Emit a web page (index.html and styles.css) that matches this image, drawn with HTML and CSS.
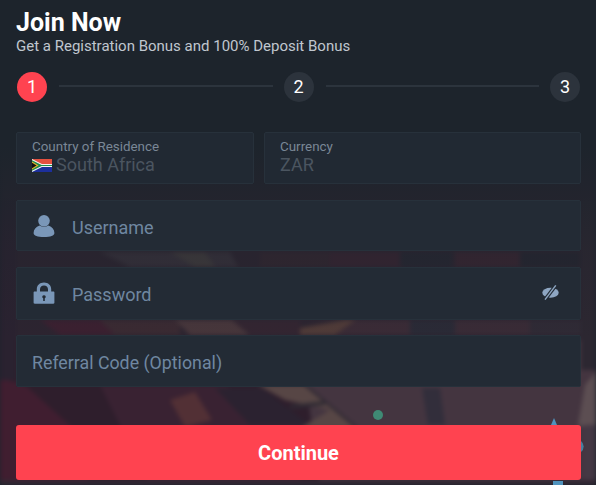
FILE: index.html
```html
<!DOCTYPE html>
<html lang="en">
<head>
<meta charset="utf-8">
<title>Join Now</title>
<link rel="stylesheet" href="styles.css">
</head>
<body>
<div class="page">
  <svg class="backdrop" viewBox="0 0 596 485" aria-hidden="true">
    <defs>
      <linearGradient id="fade" x1="0" y1="0" x2="0" y2="1">
        <stop offset="0" stop-color="#1d242c"/>
        <stop offset="0.3" stop-color="#1d242c"/>
        <stop offset="0.52" stop-color="#1d242c" stop-opacity="0.25"/>
        <stop offset="0.7" stop-color="#1d242c" stop-opacity="0"/>
      </linearGradient>
    </defs>
    <g class="backdrop-shapes">
      <rect width="596" height="485" fill="#2c2430"/>
      <rect y="340" width="596" height="145" fill="#2e1e2c"/>
      <polygon points="300,340 596,340 596,485 320,485" fill="#443540"/>
      <polygon points="0,378 25,385 75,430 90,485 0,485" fill="#401e30"/>
      <polygon points="100,385 225,385 300,425 300,485 150,485" fill="#392232"/>
      <polygon points="170,400 195,392 212,420 185,427" fill="#523035"/>
      <polygon points="215,388 262,388 310,425 250,425" fill="#2b2230"/>
      <polygon points="258,385 305,385 355,428 300,428 330,410 285,400" fill="#574645"/>
      <path d="M305 385 L357 428" stroke="#2a2630" stroke-width="2" fill="none"/>
      <polygon points="290,405 325,401 325,405 290,409" fill="#2f2a33"/>
      <polygon points="422,388 440,388 445,425 428,425" fill="#322e3b"/>
      <polygon points="585,385 596,372 596,430 578,425" fill="#5c4e52"/>
      <rect x="584" y="425" width="12" height="60" fill="#443844"/>

      <polygon points="100,252 230,252 238,267 130,267" fill="#36303a"/>
      <polygon points="170,252 205,252 215,267 195,267" fill="#3f3a3c"/>
      <polygon points="260,252 345,252 345,267 260,267" fill="#322630"/>
      <polygon points="330,252 400,252 400,267 330,267" fill="#362431"/>
      <polygon points="400,252 452,252 452,267 400,267" fill="#262631"/>
      <polygon points="455,252 520,252 520,267 455,267" fill="#372531"/>
      <polygon points="520,252 580,252 580,267 520,267" fill="#252530"/>

      <polygon points="40,320 100,320 115,335 60,335" fill="#3b2030"/>
      <polygon points="100,320 180,320 180,335 115,335" fill="#3a2a32"/>
      <polygon points="175,320 232,320 250,335 190,335" fill="#47363b"/>
      <polygon points="232,320 300,320 300,335 250,335" fill="#332531"/>
      <polygon points="300,328 345,320 356,320 335,335 300,335" fill="#503b38"/>
      <polygon points="356,320 410,320 410,335 335,335" fill="#3a2b36"/>
      <rect x="410" y="320" width="45" height="15" fill="#2a2a36"/>
      <rect x="455" y="320" width="75" height="15" fill="#392b36"/>
      <rect x="530" y="320" width="66" height="15" fill="#2f2a35"/>
      <rect y="200" width="16" height="180" fill="#2a2230"/>
      <rect x="581" y="200" width="15" height="170" fill="#2c2731"/>
      <rect y="480" width="596" height="5" fill="#332733"/>
    </g>
    <circle cx="378" cy="415" r="5" fill="#3f8a74"/>
    <polygon points="551,425 554,418 557,425" fill="#4f93bd"/>
    <path d="M581 441 A7 7 0 0 1 581 452 Z" fill="#4a7d9c"/>
    <rect x="553" y="481" width="10" height="4" fill="#4f93bd"/>
    <rect width="596" height="485" fill="url(#fade)"/>
  </svg>

  <main class="signup">
    <header class="intro">
      <h1 class="title">Join Now</h1>
      <p class="subtitle">Get a Registration Bonus and 100% Deposit Bonus</p>
    </header>

    <ol class="steps">
      <li class="step step-active">1</li>
      <li class="step-line"></li>
      <li class="step">2</li>
      <li class="step-line"></li>
      <li class="step">3</li>
    </ol>

    <form class="form">
      <div class="row">
        <div class="field field-locked field-country">
          <span class="label">Country of Residence</span>
          <span class="value">
            <svg class="flag" viewBox="0 0 20 13" aria-hidden="true">
              <rect width="20" height="6.5" fill="#e4503f"/>
              <rect y="6.5" width="20" height="6.5" fill="#1c2f9c"/>
              <path d="M0 0 L10 5 H20 V8 H10 L0 13 Z" fill="#f2f2f2"/>
              <path d="M0 1.2 L9.6 5.9 H20 V7.1 H9.6 L0 11.8 Z" fill="#1f8a4a"/>
              <polygon points="0,2.4 6.6,6.5 0,10.6" fill="#e8b52a"/>
              <polygon points="0,3.8 4.6,6.5 0,9.2" fill="#111"/>
            </svg>
            South Africa
          </span>
        </div>
        <div class="field field-locked field-currency">
          <span class="label">Currency</span>
          <span class="value">ZAR</span>
        </div>
      </div>

      <div class="field field-input field-username">
        <svg class="icon" viewBox="0 0 22 24" aria-hidden="true">
          <circle cx="11" cy="6.8" r="5.8"/>
          <path d="M6.6 11.5 C2.8 13 .6 15.6 .6 19 C.6 21.6 4.5 23 11 23 C17.5 23 21.4 21.6 21.4 19 C21.4 15.6 19.2 13 15.4 11.5 C12.8 13.2 9.2 13.2 6.6 11.5 Z"/>
        </svg>
        <span class="placeholder placeholder-username">Username</span>
      </div>

      <div class="field field-input field-password">
        <svg class="icon" viewBox="0 0 22 24" preserveAspectRatio="none" aria-hidden="true">
          <path fill-rule="evenodd" d="M1.6 10.4 H3.8 V8 C3.8 3.6 6.8 .6 11 .6 C15.2 .6 18.2 3.6 18.2 8 V10.4 H20.4 C20.9 10.4 21.4 10.9 21.4 11.4 V22.6 C21.4 23.1 20.9 23.6 20.4 23.6 H1.6 C1.1 23.6 .6 23.1 .6 22.6 V11.4 C.6 10.9 1.1 10.4 1.6 10.4 Z M7 10.4 H15 V8 C15 5.5 13.4 3.8 11 3.8 C8.6 3.8 7 5.5 7 8 Z M11 14.4 A1.8 1.8 0 0 0 10.2 17.8 V20.6 H11.8 V17.8 A1.8 1.8 0 0 0 11 14.4 Z"/>
        </svg>
        <span class="placeholder">Password</span>
        <svg class="eye" viewBox="0 0 17 15" aria-hidden="true">
          <ellipse cx="8.5" cy="7.8" rx="8.2" ry="5"/>
          <path class="eye-gap" d="M3 14.6 L13.8 .4"/>
          <path class="eye-slash" d="M3 14.6 L13.8 .4"/>
        </svg>
      </div>

      <div class="field field-input field-referral">
        <span class="placeholder placeholder-long">Referral Code (Optional)</span>
      </div>

      <button class="continue" type="button">Continue</button>
    </form>
  </main>
</div>
</body>
</html>
```
FILE: styles.css
```css
* { box-sizing: border-box; }

html, body {
  margin: 0;
  padding: 0;
  background: #1d242c;
}

.page {
  position: relative;
  width: 596px;
  height: 485px;
  overflow: hidden;
  font-family: Roboto, "Liberation Sans", sans-serif;
}

.backdrop {
  position: absolute;
  inset: 0;
  width: 596px;
  height: 485px;
  display: block;
}

.backdrop-shapes { filter: blur(2px); }

.signup {
  position: relative;
  padding: 8px 15px 0 16px;
}

.intro { height: 49px; }

.title {
  margin: 0;
  font-size: 25px;
  line-height: 30px;
  font-weight: 700;
  color: #ffffff;
}

.subtitle {
  margin: 0;
  font-size: 15px;
  line-height: 16px;
  color: #c0c7cf;
}

.steps {
  list-style: none;
  margin: 15px 1px 0 0;
  padding: 0 0 0 1px;
  display: flex;
  align-items: center;
  height: 30px;
}

.step {
  flex: none;
  width: 30px;
  height: 30px;
  border-radius: 50%;
  background: #2c333c;
  color: #ffffff;
  font-size: 18px;
  line-height: 30px;
  text-align: center;
}

.step-active { background: #ff4350; }

.step-line {
  flex: 1;
  height: 2px;
  margin: -2px 11px 0 12px;
  background: #2c343d;
}

.form {
  margin-top: 30px;
  display: flex;
  flex-direction: column;
}

.row {
  display: flex;
  gap: 10px;
}

.field {
  border: 1px solid #27313b;
  border-radius: 2px;
  background: #232b35;
}

.field-locked {
  height: 52px;
  padding: 6px 15px 0;
  display: flex;
  flex-direction: column;
  background: #212933;
}

.field-country { width: 238px; }
.field-currency { flex: 1; }

.label {
  font-size: 13.4px;
  line-height: 15px;
  color: #7a8796;
}

.value {
  display: flex;
  align-items: center;
  gap: 4px;
  font-size: 18px;
  line-height: 22px;
  color: #4b5560;
}

.flag {
  flex: none;
  width: 20px;
  height: 13px;
}

.field-input {
  display: flex;
  align-items: center;
  padding-left: 15px;
  padding-right: 21px;
}

.field-username { height: 51px; margin-top: 16px; }
.field-password { height: 53px; margin-top: 16px; }
.field-referral { height: 52px; margin-top: 15px; }

.icon {
  flex: none;
  width: 22px;
  height: 24px;
  margin: 1px 17px 0 1px;
  fill: #7a97b8;
}

.field-password .icon { height: 22px; margin-top: -1px; }

.placeholder {
  position: relative;
  top: 1px;
  font-size: 18px;
  line-height: 22px;
  color: #6f87a1;
}

.placeholder-username { top: 2px; }
.placeholder-long { top: 2px; font-size: 17.8px; }

.eye {
  flex: none;
  width: 17px;
  height: 15px;
  margin-left: auto;
  margin-top: -3px;
  fill: #8ea6c2;
}

.eye-gap {
  fill: none;
  stroke: #232b35;
  stroke-width: 3.6;
}

.eye-slash {
  fill: none;
  stroke: #8ea6c2;
  stroke-width: 1.4;
}

.continue {
  height: 55px;
  margin-top: 38px;
  border: 0;
  border-radius: 3px;
  background: #ff4350;
  color: #ffffff;
  font-family: inherit;
  font-size: 20px;
  font-weight: 700;
}
```
